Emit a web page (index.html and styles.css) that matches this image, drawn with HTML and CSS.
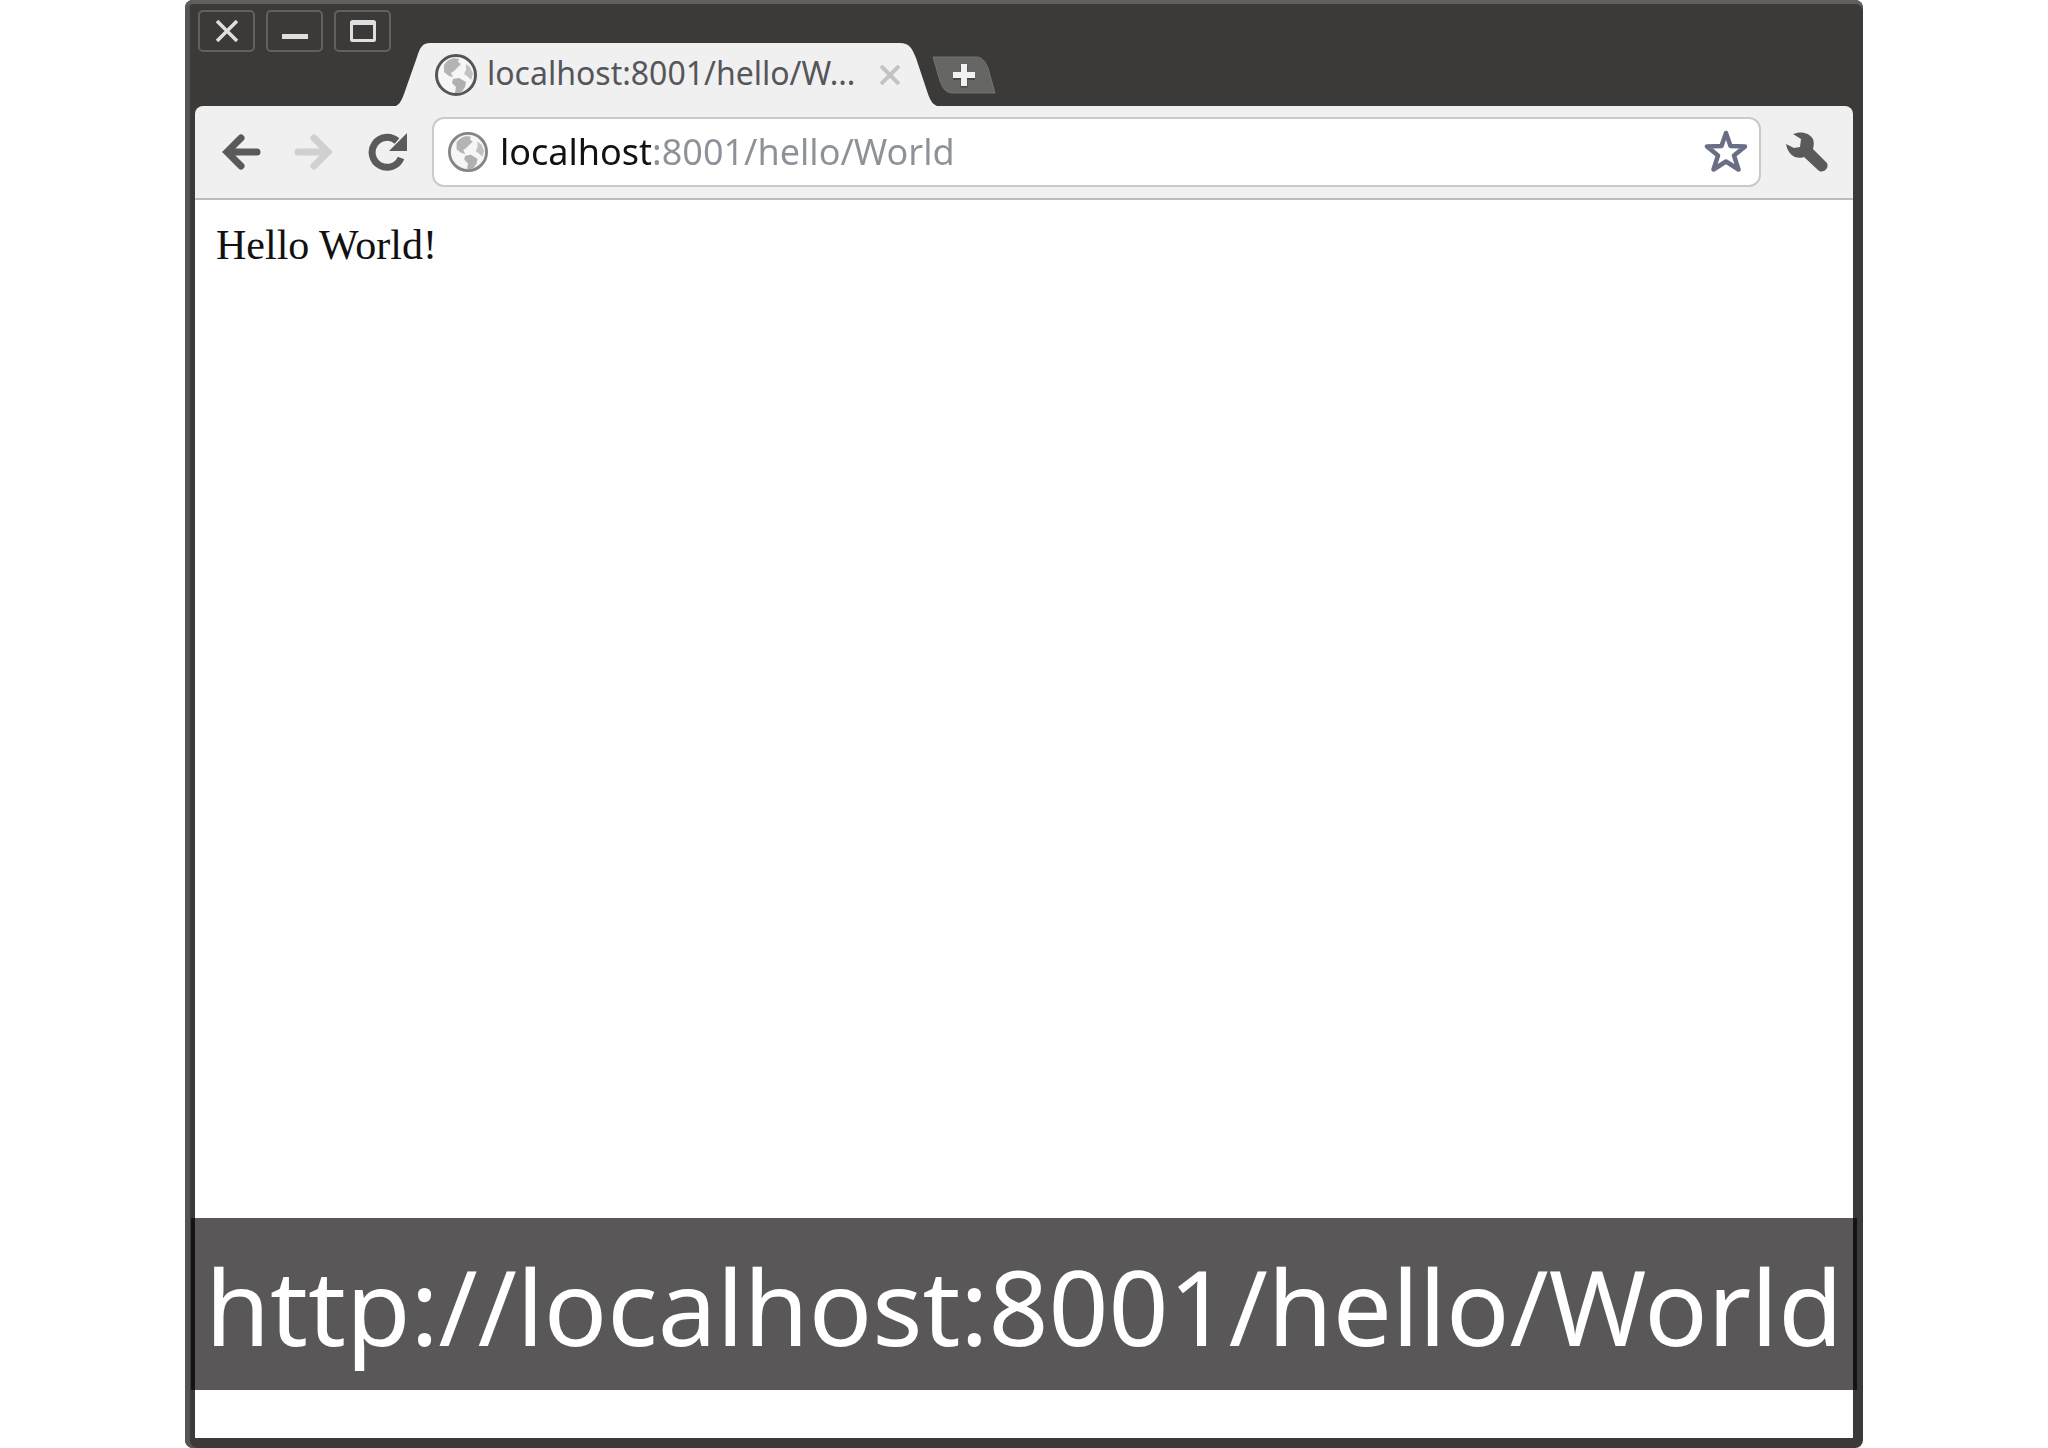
FILE: index.html
```html
<!DOCTYPE html>
<html lang="en">
<head>
    <meta charset="UTF-8">
    <meta name="viewport" content="width=device-width, initial-scale=1.0">
    <title>localhost:8001/hello/World</title>
    <link rel="stylesheet" href="styles.css">
</head>
<body>
    <svg width="0" height="0" class="sprite">
        <symbol id="globe" viewBox="0 0 42 42">
            <circle cx="21" cy="21" r="19.5" fill="#f6f6f6" stroke="currentColor" stroke-width="3"/>
            <path d="M9 11 C12 6 18 3 24 5 L23 8 L26 10 L22 14 L19 17 L16 19 L18 23 L14 22 L9 18 Z" fill="#b4b4b4"/>
            <path d="M18 25 L24 24 L31 28 L30 33 L26 39 L20 39 L21 33 L17 29 Z" fill="#b0b0b0"/>
            <path d="M31 10 L35 13 L38 20 L36 26 L32 22 L29 20 L31 16 Z" fill="#c2c2c2"/>
        </symbol>
    </svg>

    <div class="window">
        <header class="titlebar">
            <div class="window-controls">
                <button class="control" aria-label="Close window">
                    <svg width="24" height="22" viewBox="0 0 24 22"><path d="M2 1 L22 21 M22 1 L2 21" stroke="#dfdfdf" stroke-width="3.5"/></svg>
                </button>
                <button class="control" aria-label="Minimize">
                    <svg width="26" height="22" viewBox="0 0 26 22"><path d="M0 16.5 H26" stroke="#dfdfdf" stroke-width="5"/></svg>
                </button>
                <button class="control" aria-label="Maximize">
                    <svg width="26" height="22" viewBox="0 0 26 22"><rect x="1.5" y="1.5" width="23" height="19" rx="1" fill="none" stroke="#dfdfdf" stroke-width="3"/><path d="M1 3 H25" stroke="#dfdfdf" stroke-width="4"/></svg>
                </button>
            </div>
            <div class="tab">
                <svg class="tab-edge" width="38" height="64" viewBox="0 0 38 64"><path d="M0 64 C7 63 9 59 12 51 L25 14 C28 5 30 0 38 0 V64 Z" fill="#f1f0f0"/></svg>
                <div class="tab-body">
                    <svg class="tab-icon" width="42" height="42"><use href="#globe"/></svg>
                    <span class="tab-title">localhost:8001/hello/W...</span>
                    <button class="tab-close" aria-label="Close tab">
                        <svg width="20" height="20" viewBox="0 0 20 20"><path d="M1 1 L19 19 M19 1 L1 19" stroke="#c4c3c3" stroke-width="4"/></svg>
                    </button>
                </div>
                <svg class="tab-edge" width="42" height="64" viewBox="0 0 42 64"><path d="M42 64 C33 63 31 59 28 51 L16 15 C12 5 9 0 0 0 V64 Z" fill="#f1f0f0"/></svg>
            </div>
            <button class="new-tab" aria-label="New tab">
                <svg width="64" height="38" viewBox="0 0 64 38">
                    <path d="M1 1 H44 C50 1 53 5 56 12 L63 37 H21 C14 37 11 33 8 25 Z" fill="#666665" stroke="#737371"/>
                    <path d="M21 20.5 H43 M32 9.5 V31.5" stroke="#484847" stroke-width="7"/>
                    <path d="M21 19 H43 M32 8 V30" stroke="#f1f1f1" stroke-width="6"/>
                </svg>
            </button>
        </header>

        <nav class="toolbar">
            <button class="tool" aria-label="Back">
                <svg width="40" height="38" viewBox="0 0 40 38"><path d="M36 19 H8 M20 5 L6 19 L20 33" fill="none" stroke="#5a5a5a" stroke-width="7" stroke-linecap="round"/></svg>
            </button>
            <button class="tool" aria-label="Forward" disabled>
                <svg width="40" height="38" viewBox="0 0 40 38"><path d="M4 19 H32 M20 5 L34 19 L20 33" fill="none" stroke="#d0d0d0" stroke-width="7" stroke-linecap="round"/></svg>
            </button>
            <button class="tool" aria-label="Reload">
                <svg width="40" height="38" viewBox="0 0 40 38"><path d="M34 25 A15 15 0 1 1 30 8" fill="none" stroke="#5a5a5a" stroke-width="7"/><path d="M40 0 V18 H22 Z" fill="#5a5a5a"/></svg>
            </button>
            <div class="address">
                <svg class="address-icon" width="40" height="40"><use href="#globe"/></svg>
                <input class="address-input" type="text" value="localhost:8001/hello/World" aria-label="Address" spellcheck="false">
                <button class="star" aria-label="Bookmark this page">
                    <svg width="44" height="44" viewBox="0 0 44 44"><path d="M22 3 L26.5 16 L41 16.5 L30 25.5 L34.500 39.500 L22 31.500 L9.500 39.500 L14 25.500 L3 16.500 L17.500 16 Z" fill="#fff" stroke="#6a6e84" stroke-width="4.500" stroke-linejoin="round"/></svg>
                </button>
            </div>
            <button class="tool wrench" aria-label="Settings">
                <svg width="42" height="40" viewBox="0 0 42 40"><path d="M7 2 C14 -1 23 0 27 7 C28 10 28 13 27 17 L40 30 C45 35 37 43 32 38 L18 25 C10 28 2 23 0 12 L8 16 L14 15 L15 7 Z" fill="#5b5a5a"/></svg>
            </button>
        </nav>

        <main class="page">Hello World!</main>

        <div class="caption">http://localhost:8001/hello/World</div>
    </div>
</body>
</html>
```
FILE: styles.css
```css
* {
    box-sizing: border-box;
}
body {
    margin: 0;
    background: #fff;
    font-family: "Noto Sans", "Open Sans", sans-serif;
}
button {
    display: flex;
    align-items: center;
    justify-content: center;
    padding: 0;
    border: none;
    background: none;
    cursor: pointer;
}
svg {
    display: block;
}
.sprite {
    position: absolute;
}
.window {
    position: relative;
    display: flex;
    flex-direction: column;
    min-height: 100vh;
    margin: 0 185px;
    padding: 0 10px 10px;
    background: #3b3a38;
    border-radius: 8px;
    box-shadow: inset 0 4px #5f5f5d, inset 5px 0 #555453;
}

/* Title bar and tabs */
.titlebar {
    display: flex;
    align-items: flex-end;
    height: 106px;
}
.window-controls {
    display: flex;
    align-self: flex-start;
    gap: 11px;
    padding: 10px 1px 0 3px;
}
.control {
    width: 57px;
    height: 42px;
    border: 2px solid #62615f;
    border-radius: 5px;
}
.tab {
    display: flex;
    height: 63px;
}
.tab-edge {
    flex: none;
}
.tab-body {
    display: flex;
    align-items: flex-start;
    width: 470px;
    background: #f1f0f0;
}
.tab-icon {
    flex: none;
    margin: 11px 10px 0 5px;
    color: #555;
}
.tab-title {
    flex: 1;
    padding-top: 7px;
    color: #55565a;
    font-size: 32px;
    line-height: 46px;
    white-space: nowrap;
}
.tab-close {
    width: 20px;
    margin-top: 22px;
}
.new-tab {
    margin-bottom: 12px;
    margin-left: -10px;
}

/* Toolbar */
.toolbar {
    display: flex;
    align-items: center;
    gap: 33px;
    height: 94px;
    padding: 0 25px 0 26px;
    background: #f1f0f0;
    border-bottom: 2px solid #bdbcbc;
    border-radius: 8px 8px 0 0;
}
.tool {
    flex: none;
}
.address {
    display: flex;
    flex: 1;
    align-items: center;
    height: 70px;
    margin: 0 -8px;
    padding: 0 11px 0 14px;
    background: #fff;
    border: 2px solid #cbcacb;
    border-radius: 12px;
}
.address-icon {
    flex: none;
    margin-right: 12px;
    color: #858585;
}
/* host name is black, the rest of the address is grey */
.address-input {
    flex: 1;
    min-width: 0;
    padding: 0;
    border: none;
    outline: none;
    background: linear-gradient(to right, #111 151px, #8d9299 151px);
    -webkit-background-clip: text;
    background-clip: text;
    color: transparent;
    caret-color: #111;
    font-family: inherit;
    font-size: 36px;
    line-height: 48px;
}

/* Page */
.page {
    flex: 1;
    padding: 21px;
    background: #fefefe;
    color: #111;
    font-family: "Liberation Serif", serif;
    font-size: 42px;
    line-height: 48px;
}
.caption {
    position: absolute;
    right: 6px;
    bottom: 58px;
    left: 6px;
    padding-top: 4px;
    background: rgba(4, 0, 3, 0.66);
    color: #fff;
    font-size: 105px;
    line-height: 168px;
    text-align: center;
    white-space: nowrap;
}
```
